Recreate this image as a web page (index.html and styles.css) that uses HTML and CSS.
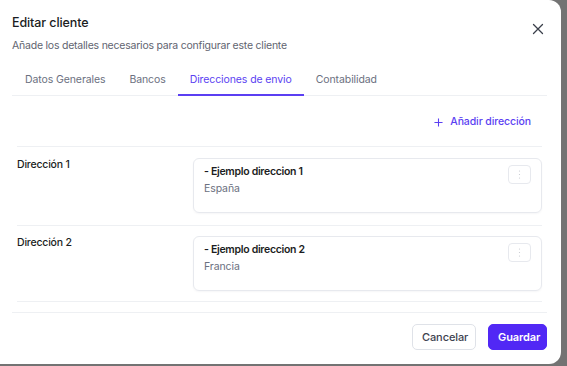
FILE: index.html
```html
<!DOCTYPE html>
<html lang="es">
<head>
<meta charset="utf-8">
<link rel="stylesheet" href="styles.css">
</head>
<body>
<div class="modal">
  <div class="header">
    <div class="titles">
      <h1 class="title">Editar cliente</h1>
      <p class="subtitle">Añade los detalles necesarios para configurar este cliente</p>
    </div>
    <button class="close" aria-label="Cerrar">
      <svg width="12" height="12" viewBox="0 0 12 12"><path d="M1.5 1.5L10.5 10.5M10.5 1.5L1.5 10.5" stroke="#3a3f4a" stroke-width="1.3" stroke-linecap="round"/></svg>
    </button>
  </div>
  <nav class="tabs">
    <span class="tab">Datos Generales</span>
    <span class="tab">Bancos</span>
    <span class="tab active">Direcciones de envio</span>
    <span class="tab">Contabilidad</span>
  </nav>
  <div class="content">
    <div class="actions">
      <button class="add">
        <svg width="9" height="9" viewBox="0 0 10 10"><path d="M5 0.5V9.5M0.5 5H9.5" stroke="#5b3ff2" stroke-width="1.2"/></svg>
        <span>Añadir dirección</span>
      </button>
    </div>
    <div class="rows">
      <div class="row">
        <div class="label">Dirección 1</div>
        <div class="card">
          <div class="card-text">
            <div class="card-title">- Ejemplo direccion 1</div>
            <div class="card-sub">España</div>
          </div>
          <button class="kebab"><svg width="3" height="9" viewBox="0 0 3 9"><circle cx="1.5" cy="1" r="0.6" fill="#c4c7ce"/><circle cx="1.5" cy="4.5" r="0.6" fill="#c4c7ce"/><circle cx="1.5" cy="8" r="0.6" fill="#c4c7ce"/></svg></button>
        </div>
      </div>
      <div class="row">
        <div class="label">Dirección 2</div>
        <div class="card">
          <div class="card-text">
            <div class="card-title">- Ejemplo direccion 2</div>
            <div class="card-sub">Francia</div>
          </div>
          <button class="kebab"><svg width="3" height="9" viewBox="0 0 3 9"><circle cx="1.5" cy="1" r="0.6" fill="#c4c7ce"/><circle cx="1.5" cy="4.5" r="0.6" fill="#c4c7ce"/><circle cx="1.5" cy="8" r="0.6" fill="#c4c7ce"/></svg></button>
        </div>
      </div>
    </div>
  </div>
  <div class="footer">
    <button class="btn secondary">Cancelar</button>
    <button class="btn primary">Guardar</button>
  </div>
</div>
</body>
</html>
```
FILE: styles.css
```css
* { box-sizing: border-box; }
html, body { margin: 0; padding: 0; }
body {
  width: 567px;
  height: 366px;
  background: #737373;
  font-family: Inter, "Noto Sans", sans-serif;
  font-size: 10.5px;
  letter-spacing: -0.1px;
  color: #1b1d22;
  overflow: hidden;
}
.modal {
  width: 561px;
  height: 364px;
  background: #fff;
  border-radius: 0 12px 12px 0;
  padding: 0 14px 0 12px;
  display: flex;
  flex-direction: column;
}
.header {
  display: flex;
  justify-content: space-between;
  align-items: flex-start;
  padding-top: 14px;
}
.title {
  margin: 0;
  font-size: 12.5px;
  font-weight: 500;
  line-height: 18px;
  letter-spacing: -0.1px;
  color: #1b1d22;
}
.subtitle {
  margin: 7px 0 0;
  font-size: 10.5px;
  line-height: 14px;
  letter-spacing: -0.22px;
  color: #5f6470;
}
.close {
  border: 0;
  background: none;
  padding: 0;
  margin: 9px 3px 0 0;
  width: 12px;
  height: 12px;
  display: flex;
}
.tabs {
  display: flex;
  margin-top: 11px;
  border-bottom: 1px solid #eef0f3;
}
.tab {
  padding: 9px 12px 7px;
  font-size: 10.5px;
  line-height: 14px;
  color: #6b7080;
  border-bottom: 2px solid transparent;
  margin-bottom: -1px;
}
.tab:first-child { padding-left: 13px; }
.tab.active {
  color: #5b3ff2;
  border-bottom-color: #5b3ff2;
}
.content {
  flex: 1;
  padding: 0 5px;
}
.actions {
  display: flex;
  justify-content: flex-end;
  padding: 19px 11px 17px 0;
}
.add {
  display: flex;
  align-items: center;
  gap: 7px;
  border: 0;
  background: none;
  padding: 0;
  font-family: inherit;
  font-size: 10.5px;
  letter-spacing: -0.1px;
  line-height: 14px;
  font-weight: 500;
  color: #5b3ff2;
}
.rows {
  border-top: 1px solid #eef0f3;
}
.row {
  display: flex;
  padding: 11px 0 12px;
  border-bottom: 1px solid #eef0f3;
}
.row + .row { padding: 10px 0 10px; }
.label {
  width: 176px;
  font-size: 10.5px;
  line-height: 14px;
  font-weight: 500;
  letter-spacing: -0.2px;
  padding-top: 0;
  color: #1b1d22;
}
.card {
  flex: 1;
  height: 55px;
  border: 1px solid #e7e9ee;
  border-radius: 6px;
  box-shadow: 0 1px 2px rgba(16, 24, 40, 0.04);
  padding: 6px 10px 0 10px;
  display: flex;
  justify-content: space-between;
  align-items: flex-start;
}
.card-text { padding-top: 0; }
.card-title {
  font-size: 10.5px;
  line-height: 14px;
  font-weight: 600;
  letter-spacing: -0.3px;
  color: #1b1d22;
}
.card-sub {
  margin-top: 3px;
  font-size: 10.5px;
  line-height: 14px;
  color: #6b7080;
}
.kebab {
  width: 23px;
  height: 19px;
  border: 1px solid #e7e9ee;
  border-radius: 4px;
  background: #fff;
  padding: 0;
  display: flex;
  align-items: center;
  justify-content: center;
}
.footer {
  border-top: 1px solid #eef0f3;
  display: flex;
  justify-content: flex-end;
  gap: 12px;
  padding: 11px 0 14px;
  margin-top: 10px;
}
.btn {
  height: 26px;
  border-radius: 5px;
  font-family: inherit;
  font-size: 11px;
  font-weight: 500;
  letter-spacing: -0.1px;
  padding: 0 9px;
}
.btn.secondary {
  background: #fff;
  border: 1px solid #dfe2e8;
  color: #3d4250;
  width: 64px;
}
.btn.primary {
  background: #5128f5;
  border: 1px solid #5128f5;
  color: #fff;
  width: 59px;
  font-weight: 600;
}
```
